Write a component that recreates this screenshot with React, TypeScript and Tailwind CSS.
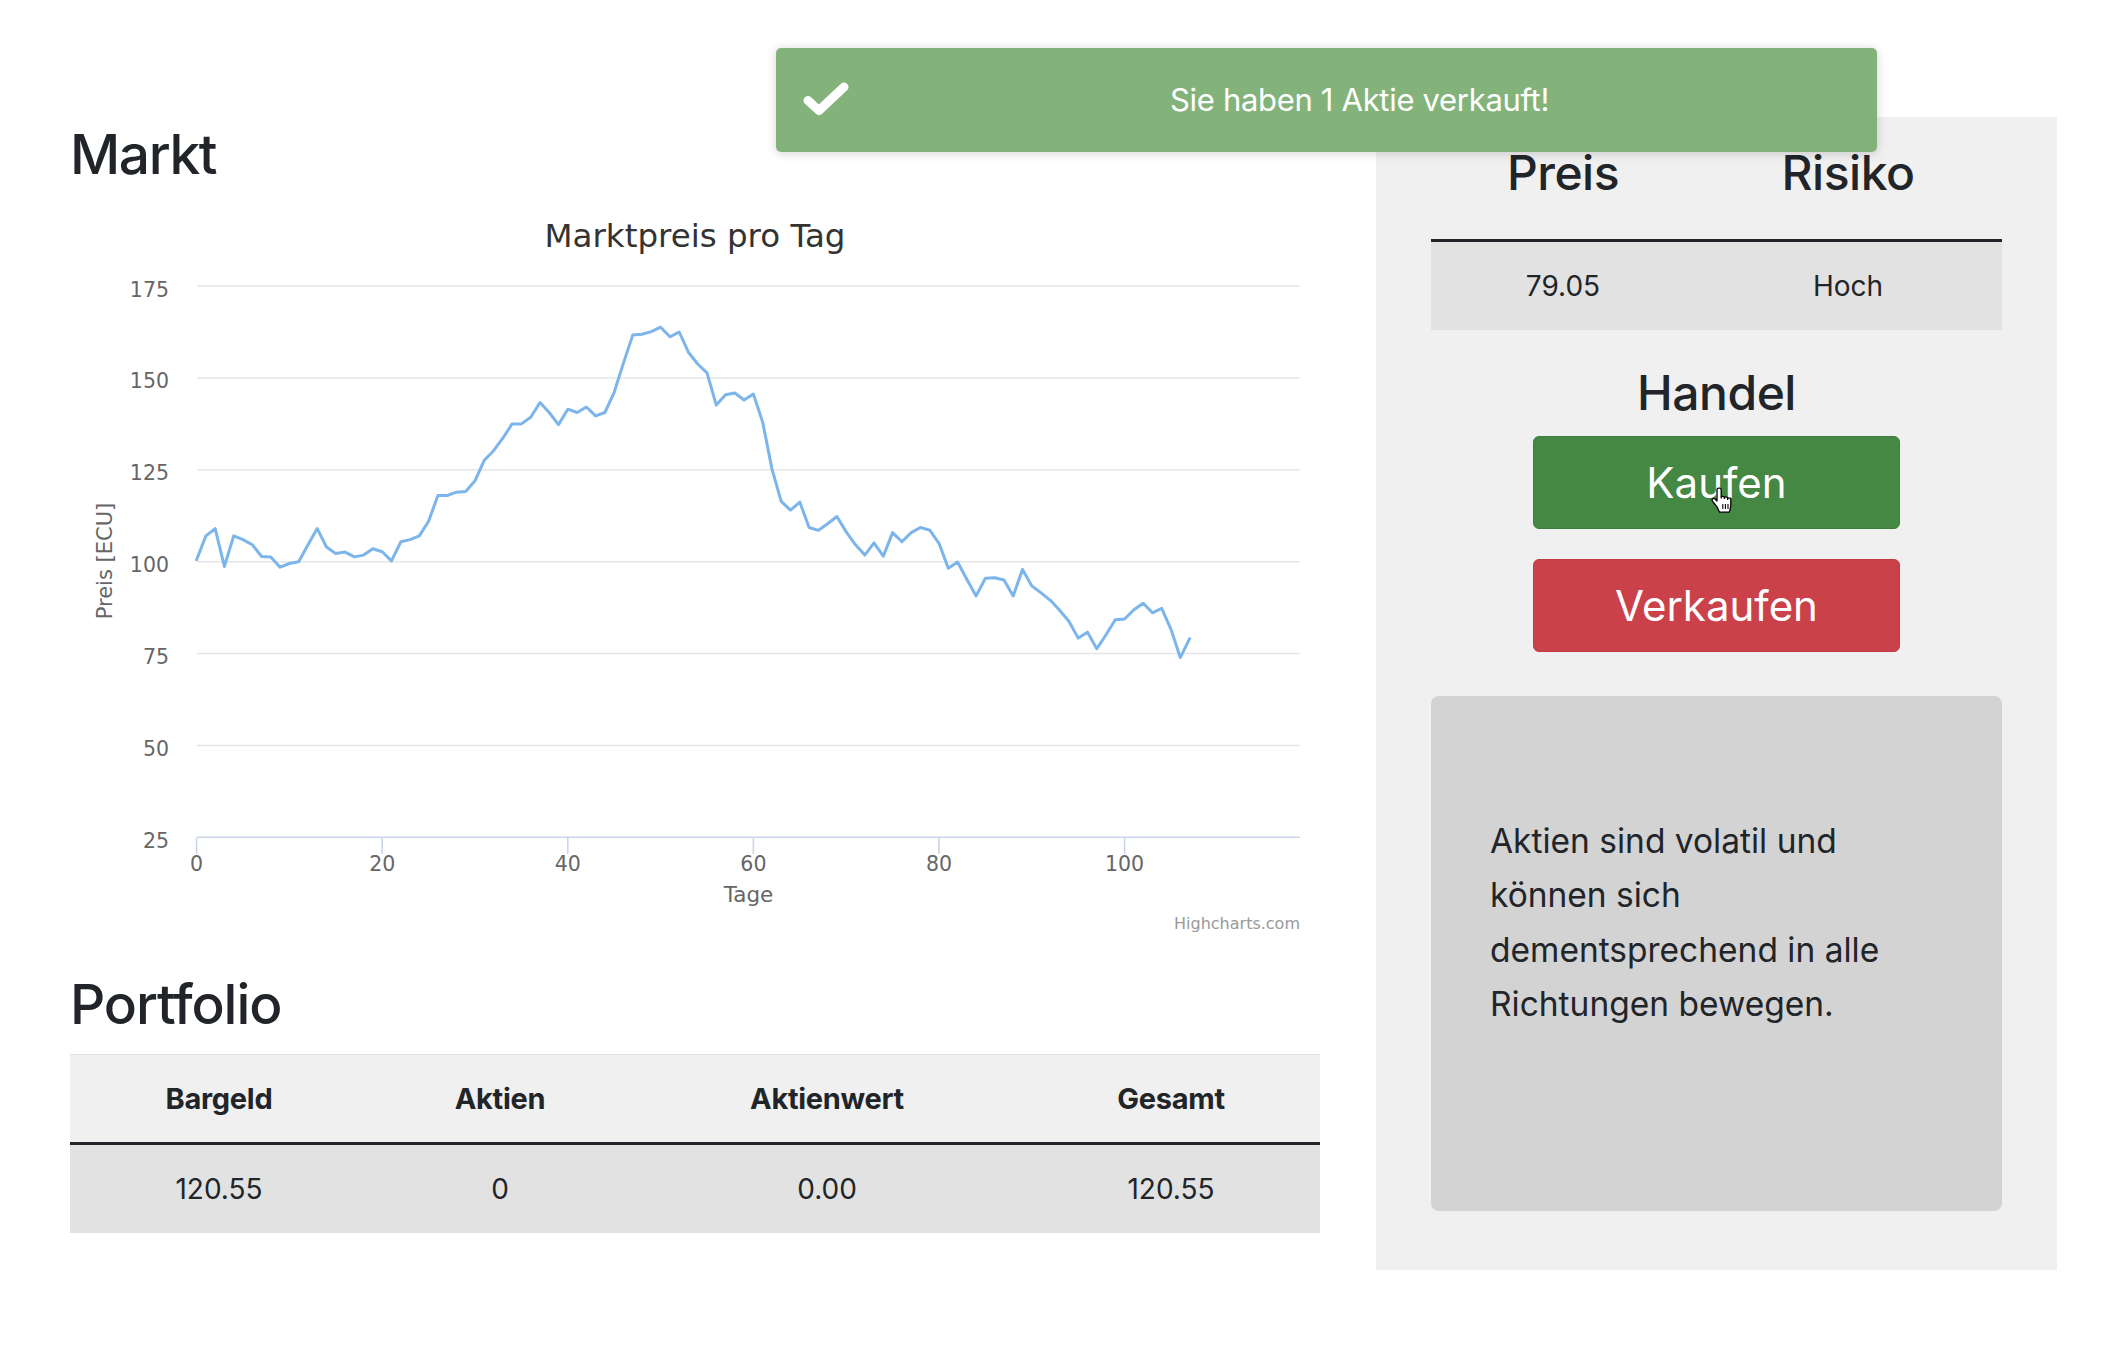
import React from "react";

const DATA: number[] = [
  100.5, 107, 109, 98.7, 107, 106, 104.6, 101.4, 101.3, 98.5,
  99.5, 100, 104.6, 109, 104, 102.2, 102.6, 101.3, 101.8, 103.5,
  102.7, 100.2, 105.4, 106, 107, 111, 118, 118, 118.9, 119.1,
  122, 127.6, 130.2, 133.6, 137.5, 137.5, 139.3, 143.3, 140.6, 137.3,
  141.5, 140.6, 142.1, 139.7, 140.6, 146.1, 154.1, 161.7, 161.9, 162.6,
  163.8, 161.2, 162.5, 157, 153.8, 151.4, 142.6, 145.4, 145.9, 144,
  145.6, 137.9, 125.2, 116.4, 114, 116.2, 109.3, 108.5, 110.3, 112.3,
  108.1, 104.6, 101.8, 105.1, 101.5, 107.9, 105.4, 107.9, 109.3, 108.6,
  105, 98.2, 99.9, 95.2, 90.7, 95.5, 95.6, 95, 90.7, 97.9,
  93.4, 91.5, 89.5, 86.8, 83.8, 79.2, 80.8, 76.3, 80.1, 84.2,
  84.4, 86.9, 88.7, 86.1, 87.3, 81.6, 73.9, 79.05,
];

const px = (d: number) => 126.6 + 9.28 * d;
const py = (v: number) => 637.3 - (v - 25) * 3.675;

function Chart() {
  const grid = [50, 75, 100, 125, 150, 175];
  const ylabels = [25, 50, 75, 100, 125, 150, 175];
  const ticks = [0, 20, 40, 60, 80, 100];
  const points = DATA.map((v, i) => `${px(i).toFixed(1)},${py(v).toFixed(1)}`).join(" ");
  const font = "'DejaVu Sans', 'Lucida Grande', sans-serif";
  return (
    <svg width={1250} height={745} viewBox="0 0 1250 745" style={{ fontFamily: font }} className="block">
      <text x={625} y={46.7} textAnchor="middle" fontSize={32.5} fill="#333333">
        Marktpreis pro Tag
      </text>
      {grid.map((g) => (
        <line key={g} x1={127} x2={1230} y1={py(g)} y2={py(g)} stroke="#e6e6e6" strokeWidth={1.4} />
      ))}
      <line x1={127} x2={1230} y1={py(25)} y2={py(25)} stroke="#ccd6eb" strokeWidth={1.6} />
      {ticks.map((t) => (
        <line key={t} x1={px(t)} x2={px(t)} y1={py(25)} y2={654} stroke="#ccd6eb" strokeWidth={1.6} />
      ))}
      {ylabels.map((l) => (
        <text key={l} x={99} y={py(l) + 10.5} textAnchor="end" fontSize={20.5} fill="#666666">
          {l}
        </text>
      ))}
      {ticks.map((t) => (
        <text key={t} x={px(t)} y={671} textAnchor="middle" fontSize={20.5} fill="#666666">
          {t}
        </text>
      ))}
      <text x={678.5} y={702} textAnchor="middle" fontSize={21.5} fill="#666666">
        Tage
      </text>
      <text
        x={35}
        y={361}
        textAnchor="middle"
        dominantBaseline="central"
        fontSize={21}
        fill="#666666"
        transform="rotate(-90 35 361)"
      >
        Preis [ECU]
      </text>
      <polyline points={points} fill="none" stroke="#7cb5ec" strokeWidth={3} strokeLinejoin="round" strokeLinecap="round" />
      <text x={1230} y={729} textAnchor="end" fontSize={16} fill="#999999">
        Highcharts.com
      </text>
    </svg>
  );
}

function HandCursor() {
  return (
    <svg width={24} height={27} viewBox="0 0 24 27" className="absolute left-[176px] top-[50px]">
      <path
        d="M8.6 1.2 C7.7 1.2 7 1.9 7 2.8 V14 L5.2 12 C4.4 11.2 3.2 11.2 2.5 12 C1.9 12.7 2 13.6 2.6 14.3 L6.8 19.6 C7.8 21.4 8.6 23.2 9.6 25.2 H19.2 C19.8 23.4 20.8 21 20.8 18.2 V12.4 C20.8 11.5 20.1 10.8 19.2 10.8 C18.3 10.8 17.6 11.5 17.6 12.4 V11.4 C17.6 10.5 16.9 9.8 16 9.8 C15.1 9.8 14.4 10.5 14.4 11.4 V10.9 C14.4 10 13.7 9.3 12.8 9.3 C11.9 9.3 11.2 10 11.2 10.9 V2.8 C11.2 1.9 10.5 1.2 9.6 1.2 Z"
        fill="#ffffff"
        stroke="#000000"
        strokeWidth={1.3}
        strokeLinejoin="round"
      />
      <line x1={12.8} y1={17} x2={12.8} y2={22} stroke="#000" strokeWidth={1.1} />
      <line x1={15.4} y1={17} x2={15.4} y2={22} stroke="#000" strokeWidth={1.1} />
      <line x1={18} y1={17} x2={18} y2={22} stroke="#000" strokeWidth={1.1} />
    </svg>
  );
}

export default function App() {
  return (
    <div className="relative min-h-[1358px] w-[2104px] bg-white text-[#212529] [font-variant-ligatures:none]" style={{ fontFamily: "Inter, 'Liberation Sans', sans-serif" }}>
      <div className="flex gap-[56px] pl-[70px]">
        {/* Left column */}
        <div className="w-[1250px] pt-[119px]">
          <h1 className="h-[70px] text-[55px] font-medium leading-[70px] tracking-[-0.025em]">Markt</h1>
          <div className="mt-[11px]">
            <Chart />
          </div>
          <h2 className="mt-[24px] h-[70px] text-[55px] font-medium leading-[70px] tracking-[-0.02em]">Portfolio</h2>
          <div className="mt-[15px] border-t border-[#dee2e6]">
            <div className="flex h-[87px] items-center bg-[#f0f0f0] text-[29px] font-bold tracking-[-0.01em]">
              <div className="w-[298px] text-center">Bargeld</div>
              <div className="w-[264px] text-center">Aktien</div>
              <div className="w-[390px] text-center">Aktienwert</div>
              <div className="w-[298px] text-center">Gesamt</div>
            </div>
            <div className="h-[3px] bg-[#212529]" />
            <div className="flex h-[88px] items-center border-b border-[#dee2e6] bg-[#e2e2e2] text-[28px]">
              <div className="w-[298px] text-center">120.55</div>
              <div className="w-[264px] text-center">0</div>
              <div className="w-[390px] text-center">0.00</div>
              <div className="w-[298px] text-center">120.55</div>
            </div>
          </div>
        </div>

        {/* Right panel */}
        <div className="mt-[117px] flex w-[681px] flex-col bg-[#f0f0f0] px-[55px] pb-[59px]">
          <div className="flex h-[122px] pt-[27px] text-[48px] font-medium leading-[58px] tracking-[-0.01em]">
            <div className="w-[264px] text-center">Preis</div>
            <div className="w-[306px] text-center">Risiko</div>
          </div>
          <div className="h-[3px] bg-[#212529]" />
          <div className="flex h-[88px] items-center border-b border-[#dee2e6] bg-[#e2e2e2] text-[28px]">
            <div className="w-[264px] text-center">79.05</div>
            <div className="w-[306px] text-center">Hoch</div>
          </div>
          <div className="mt-[34px] text-center text-[48px] font-medium leading-[57px] tracking-[-0.01em]">Handel</div>
          <div className="mt-[15px] flex flex-col items-center gap-[30px]">
            <div className="relative flex h-[93px] w-[367px] items-center justify-center rounded-[6px] border border-[#3d7d3d] bg-[#448844] text-[42px] text-white">
              Kaufen
              <HandCursor />
            </div>
            <div className="flex h-[93px] w-[367px] items-center justify-center rounded-[6px] border border-[#c23a43] bg-[#cb414a] text-[42px] text-white">
              Verkaufen
            </div>
          </div>
          <div className="mt-[44px] h-[515px] rounded-[8px] bg-[#d3d3d3] px-[59px] pt-[118px] text-[33.5px] leading-[54.3px]">
            Aktien sind volatil und können sich dementsprechend in alle Richtungen bewegen.
          </div>
        </div>
      </div>

      {/* Toast */}
      <div className="absolute left-[776px] top-[48px] flex h-[104px] w-[1101px] items-center rounded-[5px] bg-[#76ab6d]/90 pl-[27px] pr-[24px] shadow-[0_1px_10px_rgba(0,0,0,0.12),0_2px_15px_rgba(0,0,0,0.06)]">
        <svg width={46} height={36} viewBox="0 0 46 36" className="shrink-0">
          <polyline points="5,18.5 16,28.5 41,5" fill="none" stroke="#ffffff" strokeWidth={9} strokeLinecap="round" strokeLinejoin="round" />
        </svg>
        <div className="ml-[17px] flex-1 text-center text-[31px] text-white tracking-[-0.01em]">Sie haben 1 Aktie verkauft!</div>
      </div>
    </div>
  );
}
